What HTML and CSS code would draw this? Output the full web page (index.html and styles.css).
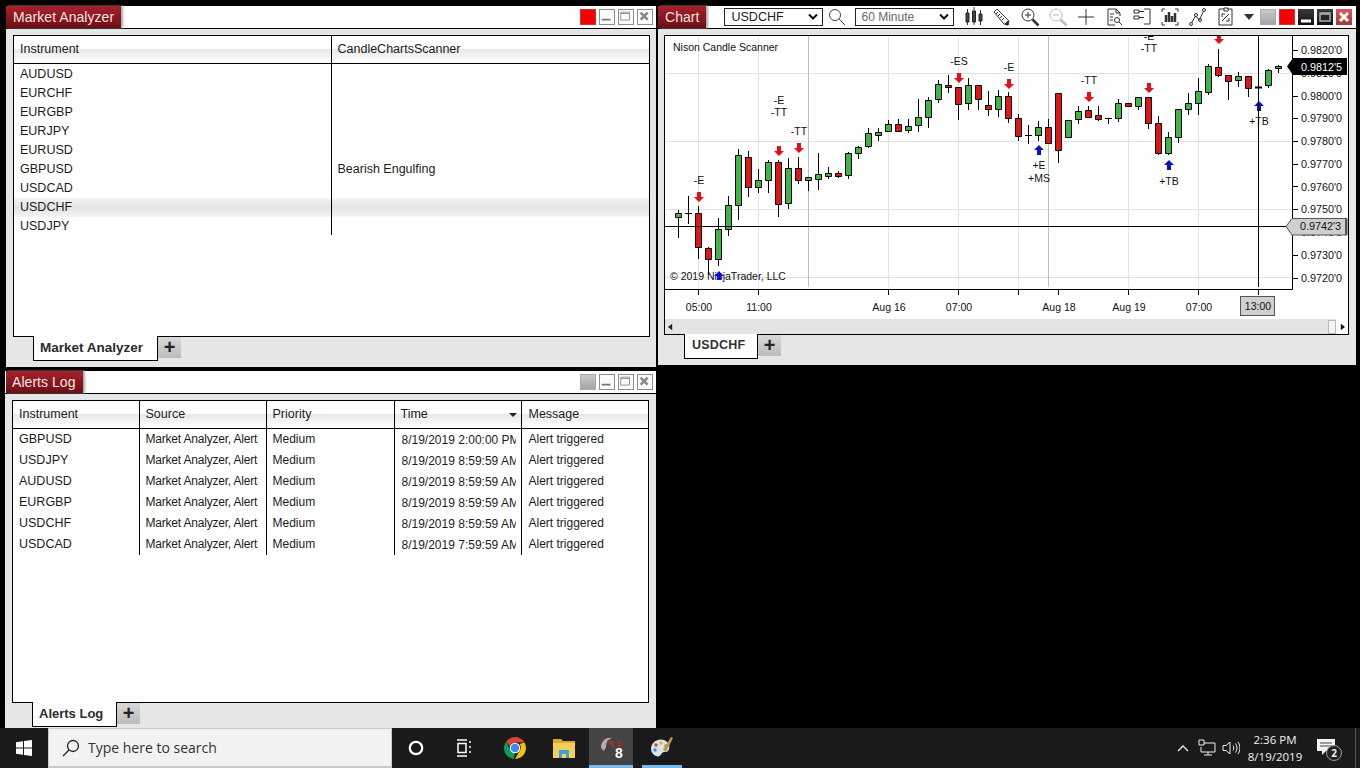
FILE: index.html
```html
<!DOCTYPE html>
<html>
  <head>
    <title>NinjaTrader Workspace</title>
    <link rel="stylesheet" href="styles.css">
  </head>
  <body>
    <main class="desktop">

      <!-- Market Analyzer -->
      <section class="window win-market">
        <div class="titlebar">
          <span class="title-tab">Market Analyzer</span>
          <div class="win-btns">
            <span class="win-btn btn-red"></span>
            <span class="win-btn btn-plain"><svg viewBox="0 0 16 16"><path d="M3 12h10" class="glyph-min"/></svg></span>
            <span class="win-btn btn-plain"><svg viewBox="0 0 16 16"><path d="M3 3.5h10v9H3zM3 5h10" class="glyph-max"/></svg></span>
            <span class="win-btn btn-plain"><svg viewBox="0 0 16 16"><path d="M4 4l8 8M12 4l-8 8" class="glyph-close"/></svg></span>
          </div>
        </div>
        <div class="win-body">
          <div class="grid-frame">
            <table class="data-table market-table">
              <thead>
                <tr><th class="col-inst">Instrument</th><th>CandleChartsScanner</th></tr>
              </thead>
              <tbody>
                <tr><td class="col-inst">AUDUSD</td><td></td></tr>
                <tr><td class="col-inst">EURCHF</td><td></td></tr>
                <tr><td class="col-inst">EURGBP</td><td></td></tr>
                <tr><td class="col-inst">EURJPY</td><td></td></tr>
                <tr><td class="col-inst">EURUSD</td><td></td></tr>
                <tr><td class="col-inst">GBPUSD</td><td>Bearish Engulfing</td></tr>
                <tr><td class="col-inst">USDCAD</td><td></td></tr>
                <tr class="row-selected"><td class="col-inst">USDCHF</td><td></td></tr>
                <tr><td class="col-inst">USDJPY</td><td></td></tr>
              </tbody>
            </table>
          </div>
          <div class="tabs">
            <span class="tab tab-market">Market Analyzer</span>
            <span class="tab-add">+</span>
          </div>
        </div>
      </section>

      <!-- Chart -->
      <section class="window win-chart">
        <div class="titlebar">
          <span class="title-tab">Chart</span>
          <div class="fake-select select-inst">USDCHF<svg viewBox="0 0 10 8"><path d="M1 1.5l4 4 4-4"/></svg></div>
          <svg class="tool-icon search-icon" viewBox="0 0 20 20"><circle cx="8" cy="8" r="5.5"/><path d="M12 12l6 6"/></svg>
          <div class="fake-select select-period">60 Minute<svg viewBox="0 0 10 8"><path d="M1 1.5l4 4 4-4"/></svg></div>
          <div class="tools">
            <svg class="tool-icon" viewBox="0 0 20 20"><path d="M3.5 2v16M10 0v18M16.5 3v15"/><path d="M2 6h3v9H2zM8.5 4h3v11h-3zM15 7h3v7h-3z" class="solid"/></svg>
            <svg class="tool-icon" viewBox="0 0 20 20"><path d="M2 5l3-3 12 12-1 4-4-1zM4 7l2-2M6 9l2-2M8 11l2-2M10 13l2-2"/><path d="M16 18l-3-1 3-3z" class="solid"/></svg>
            <svg class="tool-icon" viewBox="0 0 20 20"><circle cx="8" cy="8" r="6"/><path d="M5 8h6M8 5v6"/><path d="M12.5 12.5l6 6" class="thick"/></svg>
            <svg class="tool-icon tool-off" viewBox="0 0 20 20"><circle cx="8" cy="8" r="6"/><path d="M5 8h6"/><path d="M12.5 12.5l6 6" class="thick"/></svg>
            <svg class="tool-icon" viewBox="0 0 20 20"><path d="M10 2v16M2 10h16"/></svg>
            <svg class="tool-icon" viewBox="0 0 20 20"><path d="M11 18H4V2h8l4 4v3M12 2v4h4M6 7h4M6 10h3M6 13h3"/><circle cx="13" cy="13" r="2.5"/><path d="M15 15l3 3"/></svg>
            <svg class="tool-icon" viewBox="0 0 20 20"><path d="M2 3h5v3H2zM2 9h5v3H2zM7 4.5h5M7 10.5h5M12 2h6v15h-6"/></svg>
            <svg class="tool-icon" viewBox="0 0 20 20"><path d="M5 2H2v3M15 2h3v3M5 18H2v-3M15 18h3v-3"/><path d="M6 8v7M9 5v10M12 9v6M15 6v9" class="thick"/></svg>
            <svg class="tool-icon" viewBox="0 0 20 20"><path d="M3.5 16l4-7 4 4 4-9"/><circle cx="3" cy="17" r="1.5"/><circle cx="8" cy="8" r="1.5"/><circle cx="12" cy="13" r="1.5"/><circle cx="16" cy="3" r="1.5"/></svg>
            <svg class="tool-icon" viewBox="0 0 20 20"><path d="M8 2H3v16h13V2h-4M8 1h4v3H8zM6 14l7-7M6 7h3M6 7v3M13 14h-3M13 14v-3"/></svg>
            <svg class="tool-caret" viewBox="0 0 10 6"><path d="M0 0h10L5 6z"/></svg>
          </div>
          <div class="win-btns">
            <span class="win-btn btn-gray"></span>
            <span class="win-btn btn-red"></span>
            <span class="win-btn btn-dark"><svg viewBox="0 0 16 16"><path d="M3 12h10" class="glyph-min-w"/></svg></span>
            <span class="win-btn btn-dark"><svg viewBox="0 0 16 16"><path d="M3 4h10v8H3zM3 5h10" class="glyph-max-d"/></svg></span>
            <span class="win-btn btn-close-red"><svg viewBox="0 0 16 16"><path d="M4 4l8 8M12 4l-8 8" class="glyph-close-w"/></svg></span>
          </div>
        </div>
        <div class="win-body">
          <div class="chart-frame">
            <svg class="chart" viewBox="665 36 684 283" width="684" height="283">
              <defs><clipPath id="plot-clip"><rect x="665" y="36" width="627" height="253"/></clipPath></defs>

              <path class="grid-line" d="M665 73.5h627M665 141.5h627M665 209.5h627M665 277.5h627M698.5 36v251M758.5 36v251M888.5 36v251M958.5 36v251M1018.5 36v251M1128.5 36v251M1198.5 36v251"/>
              <path class="grid-session" d="M808.5 36v251M1048.5 36v251"/>

              <text class="lbl" x="673" y="51">Nison Candle Scanner</text>
              <text class="lbl" x="670" y="280">© 2019 NinjaTrader, LLC</text>

              <!-- wicks and dojis -->
              <path class="wick" d="M678.5 210v28M688.5 196v28M698.5 206v53M708.5 247v28M718.5 218v48M728.5 196v40M738.5 149v71M748.5 151v46M758.5 169v24M768.5 160v33M778.5 160v57M788.5 158v51M798.5 157v27M808.5 177v14M818.5 153v37M828.5 167v12M838.5 171v7M848.5 152v27M858.5 146v13M868.5 128v20M878.5 128v13M888.5 120v12M898.5 119v13M908.5 119v14M918.5 99v33M928.5 97v31M938.5 80v23M948.5 75v18M958.5 87v33M968.5 78v32M978.5 85v25M988.5 91v25M998.5 90v27M1008.5 92v31M1018.5 114v27M1028.5 125v19M1038.5 121v20M1048.5 119v24M1058.5 93v70M1078.5 106v18M1088.5 106v11M1098.5 106v15M1108.5 118v6M1118.5 99v23M1128.5 103v4M1138.5 97v13M1148.5 97v32M1158.5 116v39M1168.5 132v23M1178.5 109v34M1188.5 93v22M1198.5 78v37M1208.5 64v31M1218.5 49v28M1228.5 75v25M1238.5 72v15M1248.5 76v21M1258.5 87v20M1268.5 69v19M1278.5 65v8M685 213.5h7M1025 135.5h7M1105 118.5h7"/>
              <path class="doji-thick" d="M1255 87.5h7"/>

              <path class="candle-up" d="M675.5 213.5h6v4h-6zM715.5 229.5h6v30h-6zM725.5 205.5h6v24h-6zM735.5 155.5h6v50h-6zM755.5 180.5h6v7h-6zM765.5 162.5h6v18h-6zM785.5 168.5h6v35h-6zM805.5 177.5h6v3h-6zM815.5 174.5h6v5h-6zM825.5 173.5h6v3h-6zM845.5 153.5h6v22h-6zM855.5 147.5h6v6h-6zM865.5 133.5h6v13h-6zM875.5 132.5h6v3h-6zM885.5 124.5h6v7h-6zM905.5 126.5h6v4h-6zM915.5 117.5h6v8h-6zM925.5 100.5h6v17h-6zM935.5 84.5h6v15h-6zM965.5 85.5h6v18h-6zM995.5 96.5h6v13h-6zM1035.5 127.5h6v8h-6zM1065.5 120.5h6v17h-6zM1075.5 111.5h6v8h-6zM1115.5 103.5h6v15h-6zM1135.5 97.5h6v9h-6zM1165.5 137.5h6v16h-6zM1175.5 109.5h6v28h-6zM1185.5 103.5h6v6h-6zM1195.5 91.5h6v12h-6zM1205.5 66.5h6v26h-6zM1235.5 76.5h6v4h-6zM1265.5 70.5h6v15h-6zM1275.5 66.5h6v2h-6z"/>
              <path class="candle-down" d="M695.5 213.5h6v34h-6zM705.5 248.5h6v11h-6zM745.5 157.5h6v30h-6zM775.5 162.5h6v42h-6zM795.5 168.5h6v12h-6zM835.5 173.5h6v3h-6zM895.5 124.5h6v7h-6zM945.5 85.5h6v2h-6zM955.5 87.5h6v17h-6zM975.5 85.5h6v14h-6zM985.5 105.5h6v4h-6zM1005.5 96.5h6v22h-6zM1015.5 118.5h6v18h-6zM1045.5 127.5h6v16h-6zM1055.5 93.5h6v57h-6zM1085.5 110.5h6v7h-6zM1095.5 115.5h6v4h-6zM1125.5 103.5h6v3h-6zM1145.5 97.5h6v26h-6zM1155.5 123.5h6v30h-6zM1215.5 67.5h6v8h-6zM1225.5 75.5h6v6h-6zM1245.5 76.5h6v12h-6z"/>

              <g clip-path="url(#plot-clip)">
                <!-- signal arrows, drawn from the tip -->
                <path class="arrow-sell" d="M699 202l-5-5h3v-5h4v5h3zM779 156l-5-5h3v-5h4v5h3zM799 153l-5-5h3v-5h4v5h3zM959 83l-5-5h3v-5h4v5h3zM1009 89l-5-5h3v-5h4v5h3zM1089 102l-5-5h3v-5h4v5h3zM1149 93l-5-5h3v-5h4v5h3zM1219 44l-5-5h3v-5h4v5h3z"/>
                <path class="arrow-buy" d="M719 271l-5 5h3v4h4v-4h3zM1039 145l-5 5h3v5h4v-5h3zM1169 160l-5 5h3v5h4v-5h3zM1259 101l-5 5h3v5h4v-5h3z"/>
                <text class="lbl mid" x="699" y="184">-E</text>
                <text class="lbl mid" x="779" y="104">-E</text>
                <text class="lbl mid" x="779" y="116">-TT</text>
                <text class="lbl mid" x="799" y="135">-TT</text>
                <text class="lbl mid" x="959" y="65">-ES</text>
                <text class="lbl mid" x="1009" y="71">-E</text>
                <text class="lbl mid" x="1089" y="84">-TT</text>
                <text class="lbl mid" x="1149" y="40">-E</text>
                <text class="lbl mid" x="1149" y="52">-TT</text>
                <text class="lbl mid" x="1039" y="169">+E</text>
                <text class="lbl mid" x="1039" y="182">+MS</text>
                <text class="lbl mid" x="1169" y="185">+TB</text>
                <text class="lbl mid" x="1259" y="125">+TB</text>
              </g>

              <!-- crosshair -->
              <path class="crosshair" d="M665 226.5h627M1258.5 36v251"/>

              <!-- axes -->
              <path class="axis" d="M665 289.5h627.5V36M1292 50.5h6M1292 73.5h6M1292 96.5h6M1292 118.5h6M1292 141.5h6M1292 164.5h6M1292 186.5h6M1292 209.5h6M1292 232.5h6M1292 255.5h6M1292 278.5h6M698.5 289v6M758.5 289v6M888.5 289v6M958.5 289v6M1018.5 289v6M1058.5 289v6M1128.5 289v6M1198.5 289v6M1258.5 289v6"/>
              <g class="prices">
                <text x="1301" y="54">0.9820'0</text>
                <text x="1301" y="77">0.9810'0</text>
                <text x="1301" y="100">0.9800'0</text>
                <text x="1301" y="122">0.9790'0</text>
                <text x="1301" y="145">0.9780'0</text>
                <text x="1301" y="168">0.9770'0</text>
                <text x="1301" y="191">0.9760'0</text>
                <text x="1301" y="213">0.9750'0</text>
                <text x="1301" y="236">0.9740'0</text>
                <text x="1301" y="259">0.9730'0</text>
                <text x="1301" y="282">0.9720'0</text>
              </g>

              <text class="lbl mid" x="699" y="311">05:00</text>
              <text class="lbl mid" x="759" y="311">11:00</text>
              <text class="lbl mid" x="889" y="311">Aug 16</text>
              <text class="lbl mid" x="959" y="311">07:00</text>
              <text class="lbl mid" x="1059" y="311">Aug 18</text>
              <text class="lbl mid" x="1129" y="311">Aug 19</text>
              <text class="lbl mid" x="1199" y="311">07:00</text>

              <rect class="flag-gray" x="1240.5" y="296.5" width="34" height="19"/>
              <text class="lbl mid" x="1258" y="310">13:00</text>

              <path class="flag-dark" d="M1287 66.5l6-8.5h54v17h-54z"/>
              <g class="prices flag-text"><text x="1301" y="71">0.9812'5</text></g>
              <path class="flag-gray" d="M1286 226.5l6-8h55v16.5h-55z"/>
              <path class="flag-edge" d="M1346 219v16"/>
              <g class="prices"><text x="1300" y="230">0.9742'3</text></g>
            </svg>
            <div class="hscroll">
              <svg class="scroll-left" viewBox="0 0 6 8"><path d="M5 0v8L0 4z"/></svg>
              <span class="scroll-thumb"></span>
              <span class="scroll-right"><svg viewBox="0 0 6 8"><path d="M1 0v8l5-4z"/></svg></span>
            </div>
          </div>
          <div class="tabs">
            <span class="tab tab-chart">USDCHF</span>
            <span class="tab-add">+</span>
          </div>
        </div>
      </section>

      <!-- Alerts Log -->
      <section class="window win-alerts">
        <div class="titlebar">
          <span class="title-tab">Alerts Log</span>
          <div class="win-btns">
            <span class="win-btn btn-gray"></span>
            <span class="win-btn btn-plain"><svg viewBox="0 0 16 16"><path d="M3 12h10" class="glyph-min"/></svg></span>
            <span class="win-btn btn-plain"><svg viewBox="0 0 16 16"><path d="M3 3.5h10v9H3zM3 5h10" class="glyph-max"/></svg></span>
            <span class="win-btn btn-plain"><svg viewBox="0 0 16 16"><path d="M4 4l8 8M12 4l-8 8" class="glyph-close"/></svg></span>
          </div>
        </div>
        <div class="win-body">
          <div class="grid-frame">
            <table class="data-table alerts-table">
              <thead>
                <tr>
                  <th>Instrument</th><th>Source</th><th>Priority</th>
                  <th class="th-sorted">Time<svg viewBox="0 0 8 4"><path d="M0 0h8L4 4z"/></svg></th>
                  <th class="cell-last">Message</th>
                </tr>
              </thead>
              <tbody>
                <tr><td>GBPUSD</td><td class="td-source">Market Analyzer, Alert</td><td>Medium</td><td class="td-time"><div>8/19/2019 2:00:00 PM</div></td><td class="cell-last">Alert triggered</td></tr>
                <tr><td>USDJPY</td><td class="td-source">Market Analyzer, Alert</td><td>Medium</td><td class="td-time"><div>8/19/2019 8:59:59 AM</div></td><td class="cell-last">Alert triggered</td></tr>
                <tr><td>AUDUSD</td><td class="td-source">Market Analyzer, Alert</td><td>Medium</td><td class="td-time"><div>8/19/2019 8:59:59 AM</div></td><td class="cell-last">Alert triggered</td></tr>
                <tr><td>EURGBP</td><td class="td-source">Market Analyzer, Alert</td><td>Medium</td><td class="td-time"><div>8/19/2019 8:59:59 AM</div></td><td class="cell-last">Alert triggered</td></tr>
                <tr><td>USDCHF</td><td class="td-source">Market Analyzer, Alert</td><td>Medium</td><td class="td-time"><div>8/19/2019 8:59:59 AM</div></td><td class="cell-last">Alert triggered</td></tr>
                <tr><td>USDCAD</td><td class="td-source">Market Analyzer, Alert</td><td>Medium</td><td class="td-time"><div>8/19/2019 7:59:59 AM</div></td><td class="cell-last">Alert triggered</td></tr>
              </tbody>
            </table>
          </div>
          <div class="tabs">
            <span class="tab tab-alerts">Alerts Log</span>
            <span class="tab-add">+</span>
          </div>
        </div>
      </section>
    </main>

    <!-- Windows taskbar -->
    <footer class="taskbar">
      <span class="start-btn">
        <svg viewBox="0 0 16 16" width="16" height="16"><path d="M0 2.2l7-1v6.3H0zM8 1l8-1v7.5H8zM0 8.5h7v6.3l-7-1zM8 8.5h8V16l-8-1z"/></svg>
      </span>
      <div class="search-box">
        <svg viewBox="0 0 18 18" width="18" height="18"><circle cx="11" cy="7" r="5.5"/><path d="M7 11l-6 6"/></svg>
        <span>Type here to search</span>
      </div>
      <span class="task-slot slot-cortana"><svg viewBox="0 0 18 18" width="16" height="16"><circle cx="9" cy="9" r="7"/></svg></span>
      <span class="task-slot slot-view">
        <svg viewBox="0 0 18 18" width="18" height="18"><path d="M2 1h10M2 17h10M3 4.5h8v9H3zM15 2v2M15 7v2M15 12v2"/></svg>
      </span>
      <span class="task-slot slot-chrome">
        <svg viewBox="0 0 24 24" width="24" height="24">
          <path d="M12 1a11 11 0 0 1 9.5 5.5H12a5.5 5.5 0 0 0-5.2 3.7L3.2 5.5A11 11 0 0 1 12 1z" fill="#db4437"/>
          <path d="M21.5 6.5A11 11 0 0 1 12 23l4.7-8.2A5.5 5.5 0 0 0 16.5 8z" fill="#f4c20d"/>
          <path d="M3.2 5.5L7.7 15A5.5 5.5 0 0 0 12 17.5L10.5 23A11 11 0 0 1 3.2 5.5z" fill="#0f9d58"/>
          <circle cx="12" cy="12" r="5.3" fill="#fff"/>
          <circle cx="12" cy="12" r="4.2" fill="#4285f4"/>
        </svg>
      </span>
      <span class="task-slot slot-folder">
        <svg viewBox="0 0 24 24" width="24" height="24">
          <path d="M1 3h8l2 2h12v3H1z" fill="#e0a72e"/>
          <path d="M1 7h22v15H1z" fill="#f6cf5b"/>
          <path d="M7 14h10v8h-3v-4h-4v4H7z" fill="#3f9fd8"/>
        </svg>
      </span>
      <span class="task-slot slot-ninja is-running">
        <svg viewBox="0 0 26 26" width="26" height="26">
          <path d="M3 14C3 8 7 3 14 4c-4 1-6 4-6 9l-2 4z" fill="#b9aca6"/>
          <path d="M9 7c3-2 6-1 7 2l1 8-4-6z" fill="#8c3a34"/>
          <path d="M19 4l5 9-3 1z" fill="#b3262a"/>
          <text x="17" y="24" class="ninja-num">8</text>
        </svg>
      </span>
      <span class="task-slot slot-paint is-running">
        <svg viewBox="0 0 26 26" width="26" height="26">
          <path d="M2 15C2 8 9 4 15 6c5 2 7 7 4 11-2 2-4 0-6 2-1 3-4 4-6 3-3-1-5-4-5-7z" fill="#d8e4ee"/>
          <circle cx="7" cy="11" r="1.8" fill="#d9473c"/>
          <circle cx="12" cy="9" r="1.8" fill="#e8b62f"/>
          <circle cx="6" cy="16" r="1.8" fill="#3f8fd6"/>
          <circle cx="17" cy="12" r="1.8" fill="#58a848"/>
          <path d="M14 16l8-13 2 1-7 14z" fill="#c98f4c"/>
        </svg>
      </span>
      <div class="tray">
        <svg class="tray-chevron" viewBox="0 0 12 8" width="12" height="8"><path d="M1 7l5-5 5 5"/></svg>
        <svg class="tray-net" viewBox="0 0 18 18" width="18" height="18"><path d="M6 4h11v9H3V8M10 13v3M6 16h8M1 1h5v5H1z"/></svg>
        <svg class="tray-vol" viewBox="0 0 18 18" width="18" height="18"><path d="M1 6.5h3L8 3v12l-4-3.5H1zM11 6.5c1 1.5 1 3.5 0 5M13.5 4.5c2 2.5 2 6.5 0 9M16 3c2.5 3.5 2.5 8.5 0 12"/></svg>
        <div class="clock"><span>2:36 PM</span><span>8/19/2019</span></div>
        <span class="notify">
          <svg viewBox="0 0 18 18" width="18" height="18"><path d="M0 1h18v12H9l-4 4v-4H0z"/><path class="notify-lines" d="M3 5h12M3 8h12"/></svg>
          <span class="notify-badge">2</span>
        </span>
        <span class="show-desktop"></span>
      </div>
    </footer>
  </body>
</html>
```

FILE: styles.css
```css
html, body {
  margin: 0;
  padding: 0;
  height: 100%;
}
body {
  display: flex;
  flex-direction: column;
  background-color: #000;
  font-family: "Liberation Sans", Arial, sans-serif;
  color: #1c1c1c;
  overflow: hidden;
}

/* desktop holds free floating windows */
.desktop {
  position: relative;
  flex: 1;
}
.window {
  position: absolute;
  display: flex;
  flex-direction: column;
  background-color: #e5e6e8;
}
.win-market {
  left: 6px;
  top: 6px;
  width: 650px;
  height: 361px;
}
.win-chart {
  left: 658px;
  top: 6px;
  width: 698px;
  height: 359px;
}
.win-alerts {
  left: 5px;
  top: 371px;
  width: 651px;
  height: 357px;
}

/* title bars */
.titlebar {
  display: flex;
  align-items: center;
  flex: none;
  height: 22px;
  background-color: #fff;
  border-bottom: 1px solid #000;
}
.title-tab {
  align-self: stretch;
  display: flex;
  align-items: center;
  padding: 0 7px;
  font-size: 14px;
  letter-spacing: 0.05px;
  color: #f4e4e4;
  background: linear-gradient(#a8212b, #6c0f14);
  box-shadow: 2px 0 2px #aaa;
}
.win-alerts .title-tab {
  margin-left: 1px;
  padding: 0 7px 0 6px;
}
.win-btns {
  display: flex;
  gap: 3px;
  margin-left: auto;
  margin-right: 3px;
}
.win-chart .win-btns {
  margin-right: 4px;
}
.win-btn {
  display: block;
  box-sizing: border-box;
  width: 16px;
  height: 16px;
}
.win-btn svg {
  display: block;
  width: 100%;
  height: 100%;
  fill: none;
}
.btn-red {
  background-color: #f60000;
  border: 1px solid #c33;
}
.btn-gray {
  background: linear-gradient(#c9c9c9, #a5a5a5);
  border: 1px solid #aaa;
}
.btn-plain {
  border: 1px solid #8d8d8d;
  background-color: #fbfbfb;
}
.btn-dark {
  background: linear-gradient(#3a3a3a, #111);
}
.btn-close-red {
  background: linear-gradient(#d45a5a, #a83a3a);
}
.win-btn .glyph-min {
  stroke: #777;
  stroke-width: 2;
  transform: translate(-1px, -1px);
}
.win-btn .glyph-max {
  stroke: #888;
  transform: translate(-1px, -1px);
}
.win-btn .glyph-close {
  stroke: #888;
  stroke-width: 3;
  transform: translate(-1px, -1px);
}
.glyph-min-w {
  stroke: #fff;
  stroke-width: 3;
}
.glyph-max-d {
  stroke: #aaa;
  stroke-width: 1.5;
}
.glyph-close-w {
  stroke: #fff;
  stroke-width: 3;
}

/* chart toolbar */
.fake-select {
  display: flex;
  align-items: center;
  justify-content: space-between;
  box-sizing: border-box;
  width: 99px;
  height: 18px;
  padding: 0 4px 0 6px;
  border: 1px solid #222;
  background-color: #fff;
  font-size: 12.5px;
}
.fake-select svg {
  width: 10px;
  height: 8px;
  fill: none;
  stroke: #111;
  stroke-width: 2;
}
.select-inst {
  margin-left: 18px;
}
.select-period {
  margin-left: 8px;
  padding-left: 5px;
  font-size: 12px;
  color: #666;
}
.tool-icon {
  flex: none;
  width: 20px;
  height: 20px;
  fill: none;
  stroke: #333;
}
.search-icon {
  margin-left: 4px;
  stroke: #444;
}
.tools {
  display: flex;
  align-items: center;
  gap: 8px;
  margin-left: 10px;
}
.tool-icon .solid {
  fill: #444;
  stroke: #222;
}
.tool-icon .thick {
  stroke-width: 2.5;
}
.tool-off {
  stroke: #bbb;
}
.tool-caret {
  width: 10px;
  height: 6px;
  fill: #333;
}

/* panels */
.win-body {
  flex: 1;
  padding: 6px 0 0 7px;
  min-height: 0;
}
.win-chart .win-body {
  padding-left: 6px;
}
.grid-frame {
  box-sizing: border-box;
  width: 637px;
  height: 302px;
  border: 1px solid #000;
  background-color: #fff;
}
.win-alerts .grid-frame {
  height: 303px;
}
.data-table {
  width: 100%;
  border-collapse: collapse;
  table-layout: fixed;
  font-size: 12.5px;
}
.data-table th {
  box-sizing: border-box;
  height: 27px;
  padding: 0 0 0 6px;
  font-weight: normal;
  text-align: left;
  border-bottom: 1px solid #000;
  background: linear-gradient(#fff 46%, #e8e8e8 50%, #fff 100%);
}
.data-table td {
  padding: 0 0 0 6px;
  white-space: nowrap;
}
.market-table .col-inst {
  width: 317px;
  border-right: 1px solid #000;
}
.market-table td {
  height: 19px;
}
.market-table tbody tr:first-child td {
  height: 20px;
}
.market-table tbody tr:last-child td {
  height: 18px;
}
.row-selected td {
  background: linear-gradient(#f4f4f4, #e4e4e4 50%, #f4f4f4);
}
.alerts-table {
  font-size: 12px;
}
.alerts-table th {
  font-size: 12.5px;
  border-right: 1px solid #000;
}
.alerts-table th:nth-child(1) {
  width: 126px;
}
.alerts-table th:nth-child(2),
.alerts-table th:nth-child(4) {
  width: 127px;
}
.alerts-table th:nth-child(3) {
  width: 128px;
}
.alerts-table td {
  height: 21px;
  border-right: 1px solid #000;
}
.alerts-table .cell-last {
  padding-left: 7px;
  border-right: 0;
}
.alerts-table td:first-child {
  font-size: 12.5px;
}
.td-source {
  letter-spacing: -0.2px;
}
.data-table .td-time {
  padding-left: 7px;
}
.td-time div {
  position: relative;
  top: 1px;
  width: 114px;
  overflow: hidden;
}
.th-sorted {
  position: relative;
}
.th-sorted svg {
  position: absolute;
  right: 4px;
  top: 12px;
  width: 8px;
  height: 4px;
  fill: #222;
}

/* bottom tabs */
.tabs {
  display: flex;
  align-items: flex-start;
  margin-left: 20px;
  margin-top: -1px;
  position: relative;
}
.tab {
  display: flex;
  align-items: center;
  box-sizing: border-box;
  height: 25px;
  padding: 0 0 2px 6px;
  border: 1px solid #000;
  border-top: 0;
  background-color: #fff;
  font-size: 13.5px;
  font-weight: bold;
  color: #2b2b2b;
}
.tab-market {
  width: 125px;
}
.tab-chart {
  width: 74px;
  padding-left: 7px;
  font-size: 12.5px;
  letter-spacing: 0.2px;
  color: #333;
}
.tab-alerts {
  width: 85px;
  font-size: 13px;
}
.tab-add {
  display: flex;
  align-items: center;
  justify-content: center;
  width: 23px;
  height: 21px;
  margin-top: 1px;
  padding-bottom: 2px;
  box-sizing: border-box;
  background: linear-gradient(#d8d8d8, #bcbcbc);
  font-size: 20px;
  font-weight: bold;
  line-height: 1;
  color: #222;
}

/* chart */
.chart-frame {
  box-sizing: border-box;
  width: 685px;
  height: 300px;
  border: 1px solid #000;
  background-color: #fff;
}
.chart {
  display: block;
}
.grid-line {
  stroke: #e2e2e2;
  fill: none;
}
.grid-session {
  stroke: #bdbdbd;
  fill: none;
}
.wick,
.axis,
.crosshair {
  stroke: #000;
  fill: none;
}
.doji-thick {
  stroke: #000;
  stroke-width: 2;
}
.candle-up {
  fill: #3fb548;
  stroke: #000;
}
.candle-down {
  fill: #e31414;
  stroke: #000;
}
.arrow-sell {
  fill: #e3101a;
}
.arrow-buy {
  fill: #0b10c8;
}
.lbl {
  font-size: 10.5px;
  fill: #111;
}
.prices text {
  font-size: 10.8px;
  fill: #111;
}
.mid {
  text-anchor: middle;
}
.flag-dark {
  fill: #000;
}
.prices.flag-text text {
  fill: #fff;
}
.flag-gray {
  fill: #cfcfcf;
  stroke: #555;
}
.flag-edge {
  stroke: #555;
  stroke-width: 2;
}

/* scroll bar under the chart */
.hscroll {
  display: flex;
  align-items: center;
  height: 15px;
  background-color: #e4e4e4;
}
.scroll-left {
  width: 5px;
  height: 8px;
  margin-left: 3px;
  fill: #222;
}
.scroll-thumb {
  width: 8px;
  height: 14px;
  margin-left: auto;
  background-color: #f4f4f4;
  border: 1px solid #bbb;
  box-sizing: border-box;
}
.scroll-right {
  display: flex;
  align-items: center;
  justify-content: center;
  width: 12px;
  height: 15px;
  background-color: #fff;
}
.scroll-right svg {
  width: 5px;
  height: 8px;
  fill: #111;
}

/* taskbar */
.taskbar {
  display: flex;
  align-items: center;
  flex: none;
  height: 40px;
  background-color: #1a1a1a;
}
.start-btn {
  display: flex;
  align-items: center;
  justify-content: center;
  width: 48px;
  height: 40px;
  fill: #fff;
}
.search-box {
  display: flex;
  align-items: center;
  box-sizing: border-box;
  width: 344px;
  height: 40px;
  padding-left: 13px;
  gap: 8px;
  background-color: #f2f2f2;
  border: 1px solid #c8c8c8;
  border-bottom-width: 2px;
  font-family: "Open Sans", "Noto Sans", sans-serif;
  font-size: 14px;
  color: #333;
}
.search-box svg {
  fill: none;
  stroke: #222;
  stroke-width: 1.3;
}
.task-slot {
  display: flex;
  align-items: center;
  justify-content: center;
  box-sizing: border-box;
  width: 48px;
  height: 40px;
}
.slot-cortana {
  fill: none;
  stroke: #fff;
  stroke-width: 2.5;
}
.slot-view {
  fill: none;
  stroke: #fff;
  stroke-width: 1.5;
}
.slot-chrome {
  margin-left: 3px;
}
.slot-folder {
  margin-left: 1px;
}
.is-running {
  border-bottom: 3px solid #76b9ed;
}
.slot-ninja {
  width: 44px;
  margin-left: 1px;
  background-color: #444;
}
.slot-paint {
  width: 40px;
  margin-left: 9px;
}
.ninja-num {
  font-family: "Liberation Sans", Arial, sans-serif;
  font-size: 14px;
  font-weight: bold;
  fill: #fff;
}
.tray {
  display: flex;
  align-items: center;
  margin-left: auto;
  height: 40px;
  color: #f2f2f2;
}
.tray svg {
  flex: none;
}
.tray-chevron {
  fill: none;
  stroke: #eee;
  stroke-width: 1.3;
}
.tray-net {
  margin-left: 9px;
  fill: none;
  stroke: #eee;
}
.tray-vol {
  margin-left: 6px;
  fill: none;
  stroke: #eee;
}
.clock {
  display: flex;
  flex-direction: column;
  align-items: center;
  gap: 2px;
  width: 74px;
  margin-left: -2px;
  font-family: "Open Sans", "Noto Sans", sans-serif;
  font-size: 11.5px;
}
.notify {
  position: relative;
  display: block;
  width: 22px;
  height: 20px;
  margin-left: 5px;
  fill: #f4f4f4;
}
.notify-lines {
  stroke: #444;
}
.notify-badge {
  position: absolute;
  left: 9px;
  top: 7px;
  box-sizing: border-box;
  width: 16px;
  height: 16px;
  border: 1px solid #999;
  border-radius: 50%;
  background-color: #222;
  font-family: "Open Sans", "Noto Sans", sans-serif;
  font-size: 10px;
  font-weight: bold;
  line-height: 14px;
  text-align: center;
}
.show-desktop {
  display: block;
  width: 1px;
  height: 40px;
  margin-left: 16px;
  margin-right: 4px;
  background-color: #555;
}
```
